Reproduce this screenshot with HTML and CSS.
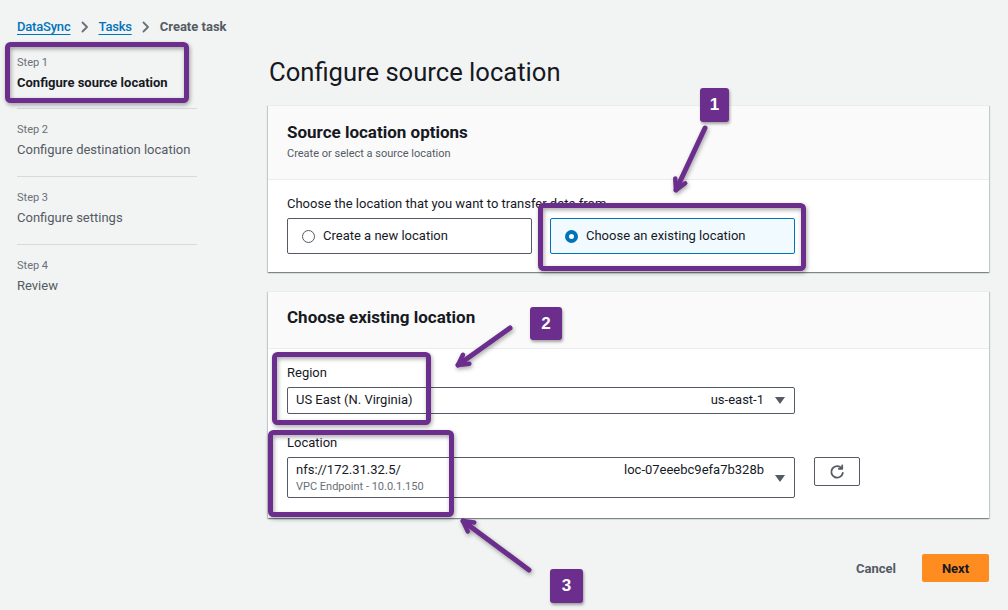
FILE: index.html
```html
<!DOCTYPE html>
<html lang="en">
<head>
<meta charset="utf-8">
<title>Create task - DataSync</title>
<link rel="stylesheet" href="styles.css">
</head>
<body>
<div class="page">
  <nav class="breadcrumb">
    <a class="crumb-link" href="#">DataSync</a>
    <svg class="crumb-sep" width="10" height="12" viewBox="0 0 10 12"><path d="M2.5 1.5 7 6l-4.5 4.5" fill="none" stroke="#687078" stroke-width="1.8" stroke-linecap="round" stroke-linejoin="round"/></svg>
    <a class="crumb-link" href="#">Tasks</a>
    <svg class="crumb-sep" width="10" height="12" viewBox="0 0 10 12"><path d="M2.5 1.5 7 6l-4.5 4.5" fill="none" stroke="#687078" stroke-width="1.8" stroke-linecap="round" stroke-linejoin="round"/></svg>
    <span class="crumb-current">Create task</span>
  </nav>

  <div class="layout">
    <aside class="steps">
      <div class="step first">
        <div class="step-num">Step 1</div>
        <div class="step-title active">Configure source location</div>
      </div>
      <div class="step">
        <div class="step-num">Step 2</div>
        <div class="step-title">Configure destination location</div>
      </div>
      <div class="step">
        <div class="step-num">Step 3</div>
        <div class="step-title">Configure settings</div>
      </div>
      <div class="step last">
        <div class="step-num">Step 4</div>
        <div class="step-title">Review</div>
      </div>
    </aside>

    <main class="content">
      <h1 class="page-title">Configure source location</h1>

      <section class="card">
        <header class="card-header">
          <h2 class="card-title">Source location options</h2>
          <p class="card-desc">Create or select a source location</p>
        </header>
        <div class="card-body body-options">
          <div class="field-label">Choose the location that you want to transfer data from</div>
          <div class="tiles">
            <div class="tile"><span class="radio"></span><span>Create a new location</span></div>
            <div class="tile selected"><span class="radio checked"></span><span>Choose an existing location</span></div>
          </div>
        </div>
      </section>

      <section class="card">
        <header class="card-header header-single">
          <h2 class="card-title">Choose existing location</h2>
        </header>
        <div class="card-body body-existing">
          <div class="field">
            <div class="field-label">Region</div>
            <div class="select select-region">
              <span class="select-value">US East (N. Virginia)</span>
              <span class="select-tag">us-east-1</span>
              <svg class="caret" width="10" height="7" viewBox="0 0 10 7"><path d="M0 0h10L5 7z" fill="#545b64"/></svg>
            </div>
          </div>
          <div class="field field-location">
            <div class="field-label">Location</div>
            <div class="location-row">
              <div class="select select-location">
                <div class="select-lines">
                  <div class="select-line">
                    <span class="select-value">nfs://172.31.32.5/</span>
                    <span class="select-tag">loc-07eeebc9efa7b328b</span>
                  </div>
                  <div class="select-sub">VPC Endpoint - 10.0.1.150</div>
                </div>
                <svg class="caret caret-low" width="10" height="7" viewBox="0 0 10 7"><path d="M0 0h10L5 7z" fill="#545b64"/></svg>
              </div>
              <button class="icon-btn" type="button" aria-label="Refresh">
                <svg width="16" height="16" viewBox="0 0 16 16"><path d="M12.6 4.2A5.8 5.8 0 1 0 13.8 9" fill="none" stroke="#545b64" stroke-width="1.8" stroke-linecap="round"/><path d="M13.2 1.4v3.4H9.8" fill="none" stroke="#545b64" stroke-width="1.8" stroke-linecap="round" stroke-linejoin="round"/></svg>
              </button>
            </div>
          </div>
        </div>
      </section>

      <div class="actions">
        <button class="btn-link" type="button">Cancel</button>
        <button class="btn-primary" type="button">Next</button>
      </div>
    </main>
  </div>

  <svg class="annotations" width="1008" height="610" viewBox="0 0 1008 610">
    <defs>
      <marker id="head" viewBox="0 0 16 16" refX="13" refY="8" markerWidth="16" markerHeight="16" markerUnits="userSpaceOnUse" orient="auto">
        <path d="M3 2.5 13 8 3 13.5" fill="none" stroke="#6b2e8c" stroke-width="4.5" stroke-linecap="round" stroke-linejoin="round"/>
      </marker>
    </defs>
    <g class="anno" fill="none" stroke="#6b2e8c" stroke-width="5" stroke-linejoin="round">
      <rect x="7.5" y="44.5" width="179" height="56" rx="3"/>
      <rect x="540.5" y="205.5" width="263" height="63" rx="3"/>
      <rect x="274.5" y="354.5" width="154" height="68" rx="3"/>
      <rect x="270.5" y="432.5" width="181" height="82" rx="3"/>
      <line x1="705" y1="128" x2="676" y2="190" stroke-linecap="round" marker-end="url(#head)"/>
      <line x1="510" y1="328" x2="458" y2="365" stroke-linecap="round" marker-end="url(#head)"/>
      <line x1="529" y1="570" x2="463" y2="521" stroke-linecap="round" marker-end="url(#head)"/>
    </g>
  </svg>
  <div class="badge badge-1">1</div>
  <div class="badge badge-2">2</div>
  <div class="badge badge-3">3</div>
</div>
</body>
</html>
```

FILE: styles.css
```css
* { box-sizing: border-box; }

html, body {
  margin: 0;
  padding: 0;
  background: #f2f3f3;
}

body {
  font-family: Roboto, "Liberation Sans", Arial, sans-serif;
  font-size: 13px;
  line-height: 20px;
  color: #16191f;
}

.page {
  position: relative;
  width: 1008px;
  height: 610px;
  overflow: hidden;
  padding: 17px 19px 0 17px;
}

/* Breadcrumb */
.breadcrumb {
  display: flex;
  align-items: center;
  gap: 9px;
  height: 20px;
  font-size: 13px;
}
.crumb-link {
  color: #0073bb;
  text-decoration: underline;
  text-underline-offset: 3px;
  font-weight: 500;
  letter-spacing: -0.2px;
}
.crumb-sep { display: block; }
.crumb-current {
  color: #545b64;
  font-weight: 700;
}

/* Layout */
.layout {
  display: grid;
  grid-template-columns: 180px 1fr;
  column-gap: 71px;
  margin-top: 4px;
}

/* Steps nav */
.step {
  padding: 13px 0 16px;
  border-bottom: 1px solid #d5dbdb;
}
.step.first { padding: 14px 0 15px; }
.step.last { border-bottom: none; }
.step-num {
  font-size: 11px;
  line-height: 16px;
  color: #687078;
  margin-bottom: 2px;
}
.step-title {
  font-size: 13px;
  line-height: 20px;
  color: #545b64;
  white-space: nowrap;
}
.step-title.active {
  color: #16191f;
  font-weight: 700;
}

/* Main content */
.page-title {
  margin: 15px 0 17px 1px;
  font-size: 25.6px;
  line-height: 32px;
  font-weight: 400;
  color: #16191f;
}

.card {
  background: #fff;
  border-top: 1px solid #eaeded;
  box-shadow: 0 1px 1px 0 rgba(0, 28, 36, 0.3), 1px 1px 1px 0 rgba(0, 28, 36, 0.15), -1px 1px 1px 0 rgba(0, 28, 36, 0.15);
  margin-bottom: 19px;
}

.card-header {
  background: #fafafa;
  border-bottom: 1px solid #eaeded;
  padding: 15px 19px 17px;
}
.header-single { padding: 14px 19px 20px; }

.card-title {
  margin: 0;
  font-size: 17px;
  line-height: 22px;
  font-weight: 700;
  color: #16191f;
}
.card-desc {
  margin: 3px 0 0;
  font-size: 11px;
  line-height: 16px;
  color: #545b64;
}

.card-body { padding: 14px 19px 18px; }
.body-existing { padding: 14px 19px 20px; }

.field-label {
  font-size: 13px;
  line-height: 20px;
  color: #16191f;
  margin-bottom: 4px;
}

.tiles {
  display: grid;
  grid-template-columns: 245px 245px;
  column-gap: 18px;
}
.tile {
  display: flex;
  align-items: center;
  gap: 8px;
  height: 36px;
  padding-left: 14px;
  border: 1px solid #545b64;
  border-radius: 2px;
  background: #fff;
  font-size: 13px;
  color: #16191f;
}
.tile.selected {
  border-color: #0073bb;
  background: #f1faff;
}
.radio {
  width: 13px;
  height: 13px;
  border-radius: 50%;
  border: 1px solid #545b64;
  background: #fff;
  flex: none;
}
.radio.checked {
  border: 4px solid #0073bb;
}

/* Selects */
.field-location { margin-top: 19px; }

.select {
  display: flex;
  align-items: center;
  width: 508px;
  border: 1px solid #545b64;
  border-radius: 2px;
  background: #fff;
}
.select-region {
  padding: 2px 9px 3px 8px;
}
.select-region .select-value { flex: 1; }
.select-tag {
  color: #16191f;
  margin-right: 11px;
}
.caret { display: block; flex: none; }

.location-row {
  display: flex;
  align-items: flex-start;
  gap: 19px;
}
.select-location {
  padding: 3px 9px 2px 8px;
  align-items: stretch;
}
.select-lines { flex: 1; }
.select-line {
  display: flex;
  justify-content: space-between;
  line-height: 18px;
}
.select-line .select-tag { margin-right: 11px; }
.select-sub {
  font-size: 11px;
  line-height: 16px;
  color: #687078;
}
.caret-low { align-self: center; margin-top: 1px; }

.icon-btn {
  width: 46px;
  height: 29px;
  border: 1px solid #545b64;
  border-radius: 2px;
  background: #fff;
  display: flex;
  align-items: center;
  justify-content: center;
  padding: 0;
}
.icon-btn svg { display: block; }

/* Actions */
.actions {
  display: flex;
  justify-content: flex-end;
  align-items: center;
  gap: 26px;
  margin-top: 36px;
}
.btn-link {
  border: none;
  background: transparent;
  padding: 0;
  font-family: inherit;
  font-size: 13px;
  font-weight: 700;
  color: #545b64;
}
.btn-primary {
  height: 28px;
  width: 67px;
  border: none;
  border-radius: 2px;
  background: #ff8c21;
  font-family: inherit;
  font-size: 13px;
  font-weight: 700;
  color: #16191f;
}

/* Annotation overlay */
.annotations {
  position: absolute;
  left: 0;
  top: 0;
  pointer-events: none;
}
.anno rect, .anno line {
  filter: drop-shadow(1px 2px 2px rgba(0, 0, 0, 0.35));
}

.badge {
  position: absolute;
  display: flex;
  align-items: center;
  justify-content: center;
  background: #6b2e8c;
  color: #fff;
  font-family: "Liberation Sans", Arial, sans-serif;
  font-weight: 700;
  font-size: 17px;
  border-radius: 3px;
  box-shadow: 1px 2px 3px rgba(0, 0, 0, 0.35);
}
.badge-1 { left: 700px; top: 88px; width: 29px; height: 34px; }
.badge-2 { left: 530px; top: 307px; width: 32px; height: 33px; }
.badge-3 { left: 550px; top: 569px; width: 33px; height: 34px; }
```
